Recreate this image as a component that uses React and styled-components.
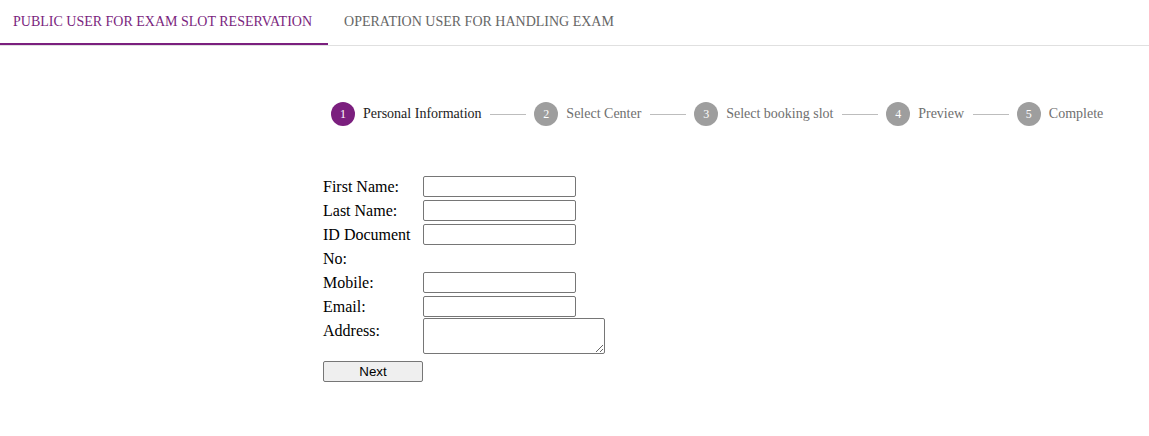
import * as React from "react"
import styled, { createGlobalStyle } from "styled-components"

const GlobalStyle = createGlobalStyle`
    body {
        margin: 0;
        background: #fff;
        font-family: "Liberation Serif", "Times New Roman", serif;
    }
`

const TabBar = styled.div`
    display: flex;
    border-bottom: 1px solid #e0e0e0;
`

const Tab = styled.div`
    height: 43px;
    padding: 0 16px;
    display: flex;
    align-items: center;
    font-size: 14px;
    text-transform: uppercase;
    color: ${props => props.active ? "#7b1f7e" : "#666"};
    border-bottom: 2px solid ${props => props.active ? "#7b1f7e" : "transparent"};

    &:first-child {
        padding-left: 13px;
    }
`

const Content = styled.div`
    padding: 56px 0 0 323px;
`

const Stepper = styled.div`
    display: flex;
    align-items: center;
    margin-left: 8px;
    height: 24px;
`

const Step = styled.div`
    display: flex;
    align-items: center;
    gap: 8px;
`

const Circle = styled.span`
    width: 24px;
    height: 24px;
    border-radius: 50%;
    background: ${props => props.active ? "#7b1f7e" : "#9e9e9e"};
    color: #fff;
    font-size: 12px;
    display: flex;
    align-items: center;
    justify-content: center;
`

const StepLabel = styled.span`
    font-size: 14px;
    color: ${props => props.active ? "#222" : "#6f6f6f"};
`

const Connector = styled.span`
    width: 36px;
    height: 1px;
    background: #bdbdbd;
    margin: 0 8px 0 8.75px;
`

const FormTable = styled.table`
    margin-top: 49px;
    border-spacing: 0;
    font-size: 16px;
    color: #000;

    td {
        padding: 0;
        vertical-align: top;
    }
`

const Label = styled.td`
    width: 100px;
    line-height: 24px;
`

const Input = styled.input`
    display: block;
    box-sizing: border-box;
    width: 153px;
    height: 21px;
    margin: 1px 0 0;
    border: 1px solid #767676;
    border-radius: 2px;
    padding: 1px 2px;
`

const TextArea = styled.textarea`
    display: block;
    box-sizing: border-box;
    width: 182px;
    height: 36px;
    margin: -1px 0 3px;
    border: 1px solid #767676;
    border-radius: 2px;
    padding: 2px;
`

const Button = styled.button`
    display: block;
    width: 100px;
    height: 21px;
    margin: 4px 0 0;
    padding: 0;
    background: #efefef;
    border: 1px solid #767676;
    border-radius: 2px;
    font-family: "Liberation Sans", Arial, sans-serif;
    font-size: 13.33px;
    color: #000;
`

const steps = ["Personal Information", "Select Center", "Select booking slot", "Preview", "Complete"]

const fields = [
    { label: "First Name:" },
    { label: "Last Name:" },
    { label: "ID Document No:" },
    { label: "Mobile:" },
    { label: "Email:" },
]

const App = () => {
    return (
        <>
            <GlobalStyle />
            <TabBar>
                <Tab active>Public user for exam slot reservation</Tab>
                <Tab>Operation user for handling exam</Tab>
            </TabBar>
            <Content>
                <Stepper>
                    {steps.map((s, i) => (
                        <React.Fragment key={s}>
                            {i > 0 && <Connector />}
                            <Step>
                                <Circle active={i === 0}>{i + 1}</Circle>
                                <StepLabel active={i === 0}>{s}</StepLabel>
                            </Step>
                        </React.Fragment>
                    ))}
                </Stepper>
                <FormTable>
                    <tbody>
                        {fields.map(f => (
                            <tr key={f.label}>
                                <Label>{f.label}</Label>
                                <td><Input type="text" /></td>
                            </tr>
                        ))}
                        <tr>
                            <Label>Address:</Label>
                            <td><TextArea /></td>
                        </tr>
                        <tr>
                            <td colSpan={2}><Button>Next</Button></td>
                        </tr>
                    </tbody>
                </FormTable>
            </Content>
        </>
    )
}

export default App
